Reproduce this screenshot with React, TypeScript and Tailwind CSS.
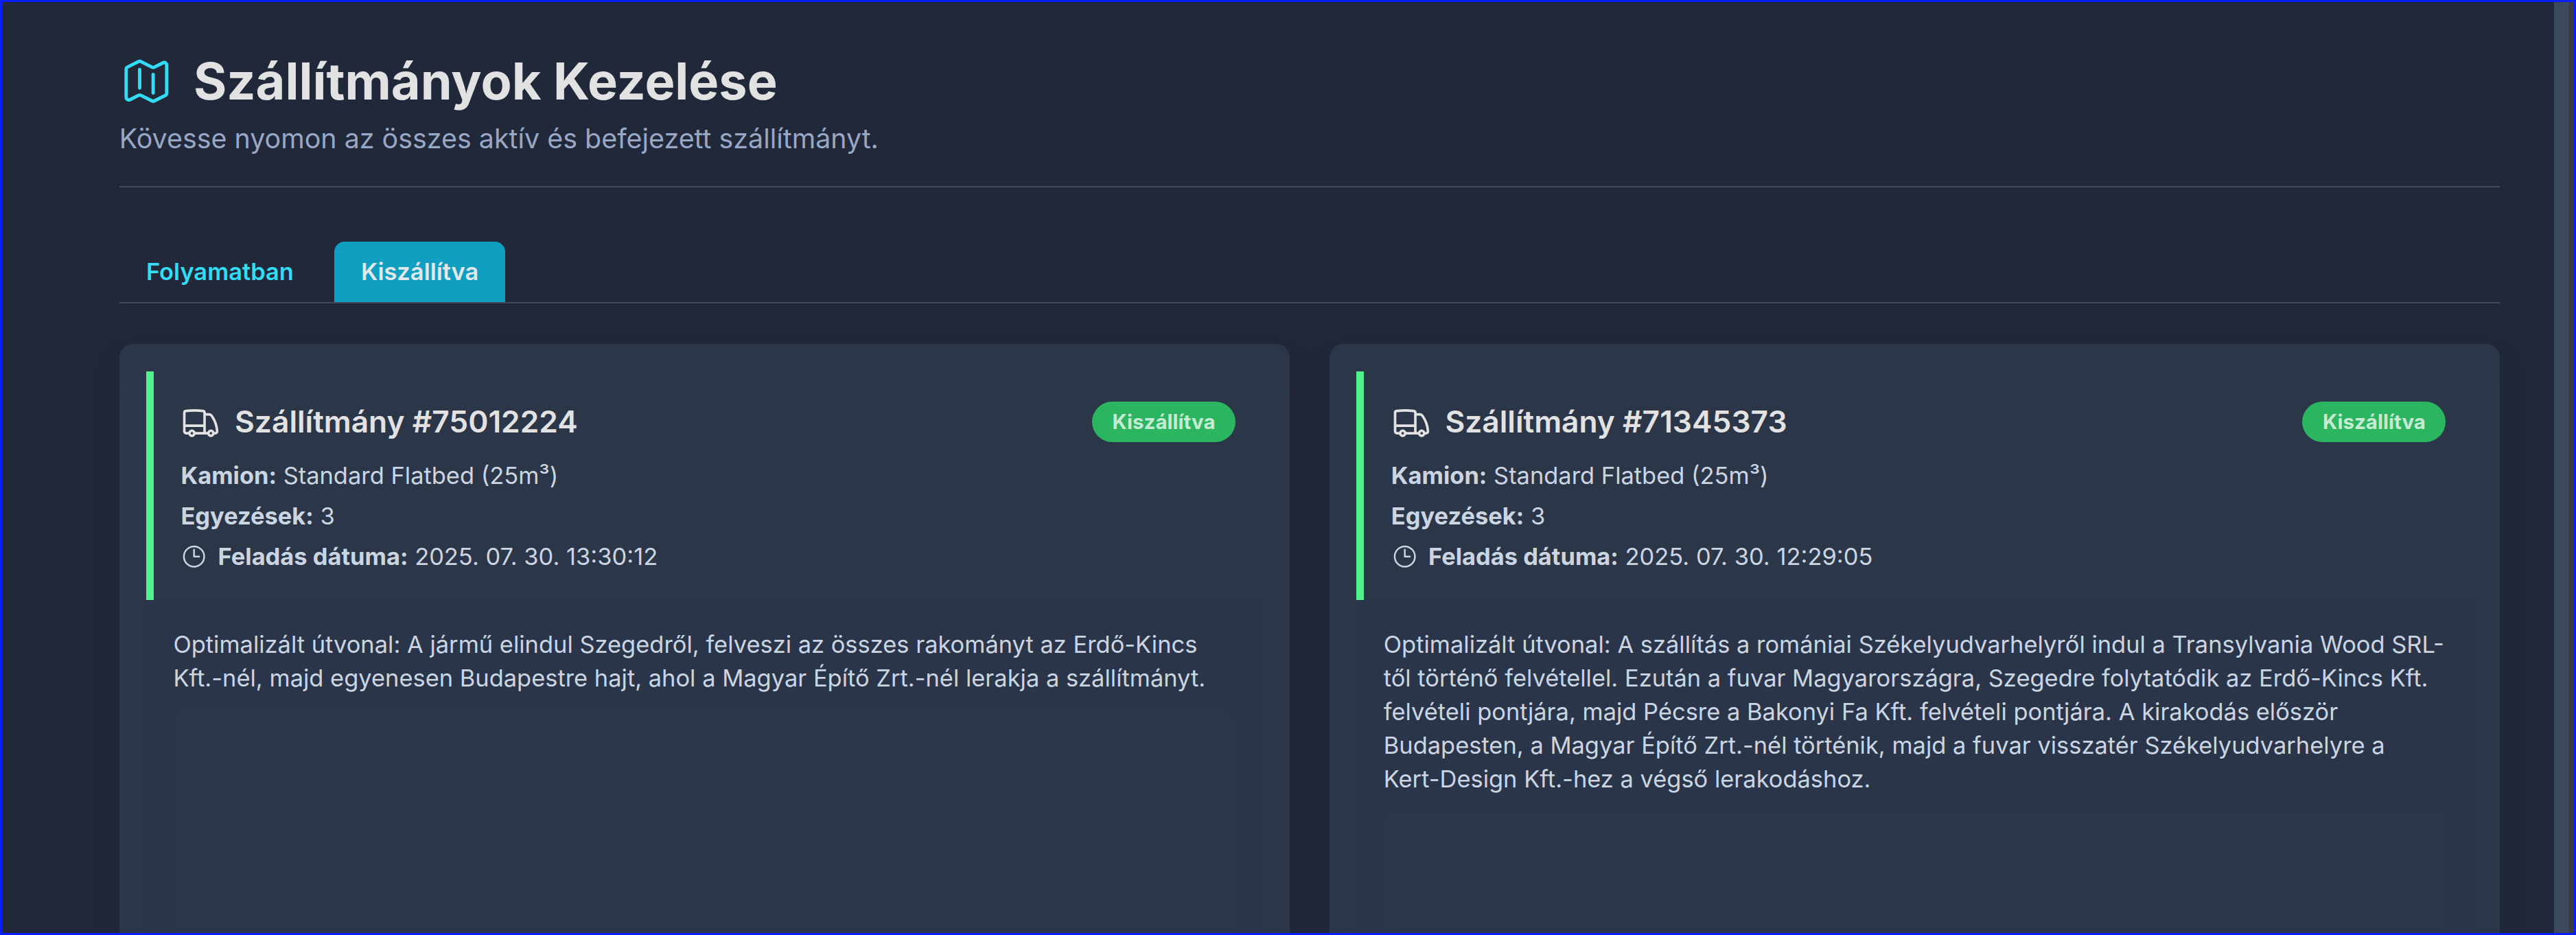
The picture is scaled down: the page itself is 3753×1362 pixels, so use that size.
import { HiOutlineClock, HiOutlineMap, HiOutlineTruck } from "react-icons/hi2";

type Shipment = { id: string; truck: string; matches: number; date: string; route: string };

const shipments: Shipment[] = [
  {
    id: "75012224",
    truck: "Standard Flatbed (25m³)",
    matches: 3,
    date: "2025. 07. 30. 13:30:12",
    route:
      "Optimalizált útvonal: A jármű elindul Szegedről, felveszi az összes rakományt az Erdő-Kincs Kft.-nél, majd egyenesen Budapestre hajt, ahol a Magyar Építő Zrt.-nél lerakja a szállítmányt.",
  },
  {
    id: "71345373",
    truck: "Standard Flatbed (25m³)",
    matches: 3,
    date: "2025. 07. 30. 12:29:05",
    route:
      "Optimalizált útvonal: A szállítás a romániai Székelyudvarhelyről indul a Transylvania Wood SRL-től történő felvétellel. Ezután a fuvar Magyarországra, Szegedre folytatódik az Erdő-Kincs Kft. felvételi pontjára, majd Pécsre a Bakonyi Fa Kft. felvételi pontjára. A kirakodás először Budapesten, a Magyar Építő Zrt.-nél történik, majd a fuvar visszatér Székelyudvarhelyre a Kert-Design Kft.-hez a végső lerakodáshoz.",
  },
];

function ShipmentCard({ shipment }: { shipment: Shipment }) {
  return (
    <article className="flex h-[1100px] flex-col rounded-[20px] bg-[#2b3648] px-[39.2px] pt-[40px] shadow-[0_25px_37px_-7px_rgba(33,36,56,0.5)]">
      <div className="h-[333px] shrink-0 border-l-[11px] border-[#50f08c] px-[39.4px] pt-[39px]">
        <div className="flex h-[69px] items-center justify-between">
          <h2 className="flex items-center text-[44.3px] leading-[69px] font-semibold text-[#e2e2e2]">
            <HiOutlineTruck className="mr-[19.7px] size-[59px]" />
            Szállítmány #{shipment.id}
          </h2>
          <span className="rounded-full bg-[#2bb561] px-[29.5px] py-[9.8px] text-[29.5px] leading-[39.4px] font-bold text-[#c6ead2]">
            Kiszállítva
          </span>
        </div>
        <div className="mt-[19px] space-y-[9.8px] text-[34.45px] leading-[49.2px] text-[#cbd5e1]">
          <p>
            <strong>Kamion:</strong> {shipment.truck}
          </p>
          <p>
            <strong>Egyezések:</strong> {shipment.matches}
          </p>
          <p className="flex items-center">
            <HiOutlineClock className="mr-[14.8px] size-[39.4px]" />
            <span>
              <strong>Feladás dátuma:</strong> {shipment.date}
            </span>
          </p>
        </div>
      </div>
      <div className="flex grow flex-col bg-[#2a354a] px-[39.4px] pt-[39.6px]">
        <p className="text-[34.45px] leading-[49.2px] text-[#cbd5e1]">{shipment.route}</p>
        <div className="mt-[19px] grow rounded-[20px] bg-[#2b3648]" />
      </div>
    </article>
  );
}

export default function App() {
  return (
    <div className="flex h-[1362px] w-[3753px] overflow-hidden border-[3px] border-[#0a1eff] bg-[#212839] font-['Inter',sans-serif]">
      <main className="h-full grow overflow-hidden pt-[71px] pr-[79px] pl-[170.8px]">
        <header className="h-[199px] border-b-2 border-[#3f4a5f]">
          <h1 className="flex items-center text-[73.8px] leading-[88.6px] font-bold text-[#e2e2e2]">
            <HiOutlineMap className="mr-[29.5px] size-[78.7px] text-[#33dcf5]" />
            <span className="pt-px">Szállítmányok Kezelése</span>
          </h1>
          <p className="mt-[9.8px] text-[39.4px] leading-[59px] text-[#98a7c4]">
            Kövesse nyomon az összes aktív és befejezett szállítmányt.
          </p>
        </header>
        <nav className="mt-[79px] flex h-[90px] gap-[19.7px] border-b-2 border-[#3f4a5f] text-[34.45px] leading-[49.2px] font-semibold">
          <button className="rounded-t-[15px] px-[39.2px] text-[#33dcf5]">Folyamatban</button>
          <button className="rounded-t-[15px] bg-[#109fc1] px-[39.2px] text-[#e2e8ea]">Kiszállítva</button>
        </nav>
        <section className="mt-[59px] grid grid-cols-2 gap-[58.6px]">
          {shipments.map((s) => (
            <ShipmentCard key={s.id} shipment={s} />
          ))}
        </section>
      </main>
      <div className="w-[22px] shrink-0 bg-[#3d4a5e]" />
      <div className="w-[7px] shrink-0 bg-[#3a3b3c]" />
    </div>
  );
}
